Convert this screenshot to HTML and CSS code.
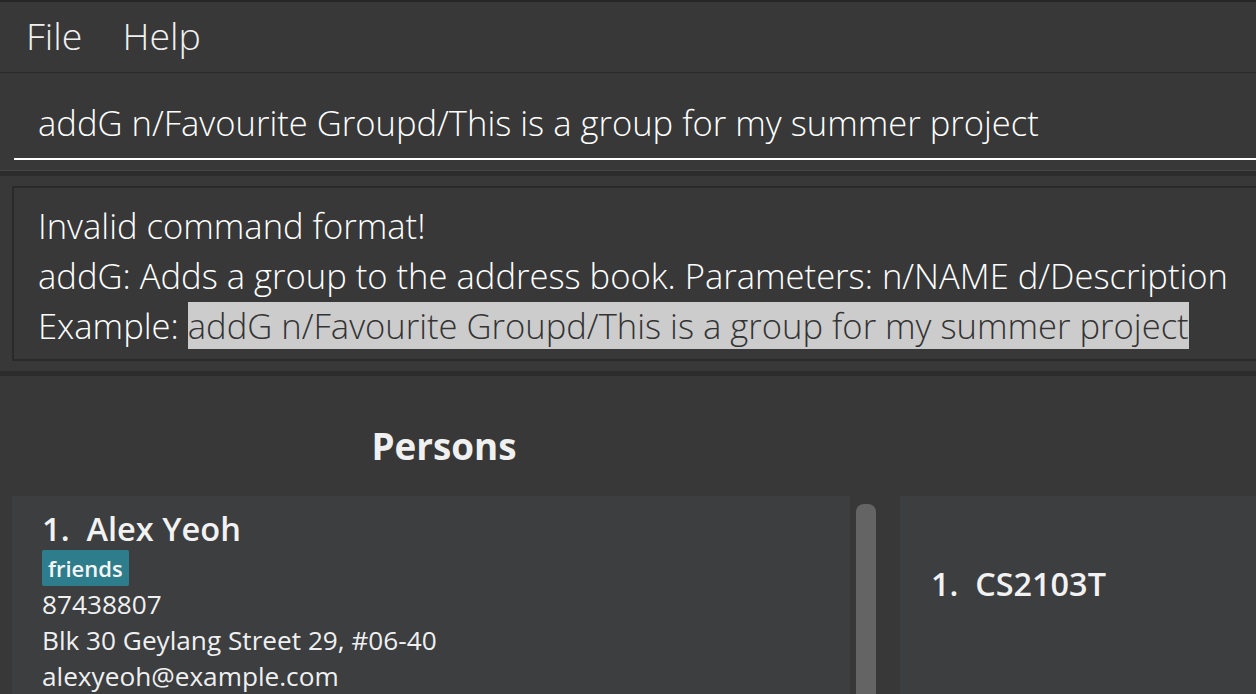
FILE: index.html
```html
<!DOCTYPE html>
<html>
<head>
<meta charset="utf-8">
<link rel="stylesheet" href="styles.css">
</head>
<body>
<div class="window">
  <div class="menubar">
    <span class="menu-item">File</span>
    <span class="menu-item">Help</span>
  </div>
  <div class="command">
    <div class="cmd-input">addG n/Favourite Groupd/This is a group for my summer project</div>
  </div>
  <div class="result-wrap">
    <div class="result">
      <div class="line">Invalid command format!</div>
      <div class="line">addG: Adds a group to the address book. Parameters: n/NAME d/Description</div>
      <div class="line">Example: <span class="sel">addG n/Favourite Groupd/This is a group for my summer project</span></div>
    </div>
  </div>
  <div class="main">
    <div class="persons-col">
      <div class="col-title">Persons</div>
      <div class="list-row">
        <div class="card">
          <div class="name">1.&nbsp;&nbsp;Alex Yeoh</div>
          <div class="tags"><span class="tag">friends</span></div>
          <div class="field">87438807</div>
          <div class="field">Blk 30 Geylang Street 29, #06-40</div>
          <div class="field">alexyeoh@example.com</div>
        </div>
        <div class="scrollbar"><div class="thumb"></div></div>
      </div>
    </div>
    <div class="groups-col">
      <div class="group-card">
        <div class="group-name">1.&nbsp;&nbsp;CS2103T</div>
      </div>
    </div>
  </div>
</div>
</body>
</html>
```

FILE: styles.css
```css
* { box-sizing: border-box; }
html, body {
  margin: 0;
  padding: 0;
  background: #383838;
  overflow: hidden;
}
body {
  font-family: "Open Sans", "Noto Sans", sans-serif;
  color: #ffffff;
  width: 1256px;
  height: 694px;
}
.window {
  border-top: 2px solid #262626;
  height: 694px;
  display: flex;
  flex-direction: column;
}
.menubar {
  flex-shrink: 0;
  height: 71px;
  display: flex;
  align-items: center;
  gap: 40px;
  padding: 0 0 4px 26px;
  border-bottom: 1px solid #2a2a2a;
  font-size: 37.5px;
  font-weight: 300;
  color: #f0f0f0;
}
.command {
  flex-shrink: 0;
  height: 98px;
  padding: 0 0 0 14px;
  border-bottom: 1px solid #464646;
  display: flex;
  align-items: flex-start;
}
.cmd-input {
  margin-top: 26px;
  width: 100%;
  height: 61px;
  padding-left: 24px;
  border-bottom: 2px solid #ffffff;
  font-size: 34.6px;
  font-weight: 300;
  line-height: 48px;
  white-space: nowrap;
  color: #ffffff;
}
.result-wrap {
  flex-shrink: 0;
  border-top: 5px solid #2c2c2c;
  padding: 10px 0 10px 12px;
  border-bottom: 5px solid #2c2c2c;
}
.result {
  border: 2px solid #2a2a2a;
  border-right: none;
  height: 175px;
  padding: 13px 0 0 24px;
  font-size: 34.6px;
  font-weight: 300;
  line-height: 50px;
  white-space: nowrap;
}
.sel {
  background: #cccccc;
  color: #333333;
}
.main {
  flex: 1;
  min-height: 0;
  overflow: hidden;
  display: flex;
  padding-left: 12px;
}
.persons-col {
  width: 864px;
  display: flex;
  flex-direction: column;
}
.col-title {
  flex-shrink: 0;
  height: 120px;
  padding-top: 46px;
  text-align: center;
  font-size: 36.8px;
  font-weight: 700;
  line-height: 48px;
  color: #f0f0f0;
}
.list-row {
  flex: 1;
  display: flex;
}
.card {
  width: 838px;
  background: #3c3e40;
  padding: 12px 0 0 30px;
  color: #eeeeee;
}
.name {
  font-size: 32.6px;
  font-weight: 600;
  line-height: 41px;
  color: #f2f2f2;
}
.tags {
  display: flex;
  height: 37px;
  align-items: center;
}
.tag {
  background: #2e7d8d;
  color: #f5f5f5;
  font-size: 22px;
  font-weight: 600;
  line-height: 36px;
  padding: 0 6px;
  border-radius: 2px;
}
.field {
  font-size: 26.2px;
  line-height: 36px;
  color: #f0f0f0;
}
.scrollbar {
  width: 26px;
  padding: 8px 0 0 6px;
}
.thumb {
  width: 20px;
  height: 100%;
  background: #646464;
  border-radius: 8px 8px 0 0;
}
.groups-col {
  flex: 1;
  display: flex;
  flex-direction: column;
  padding-top: 120px;
  padding-left: 24px;
}
.group-card {
  flex: 1;
  background: #3c3e40;
  padding: 65px 0 0 31px;
}
.group-name {
  font-size: 32.4px;
  font-weight: 600;
  line-height: 44px;
  color: #f2f2f2;
}
```
